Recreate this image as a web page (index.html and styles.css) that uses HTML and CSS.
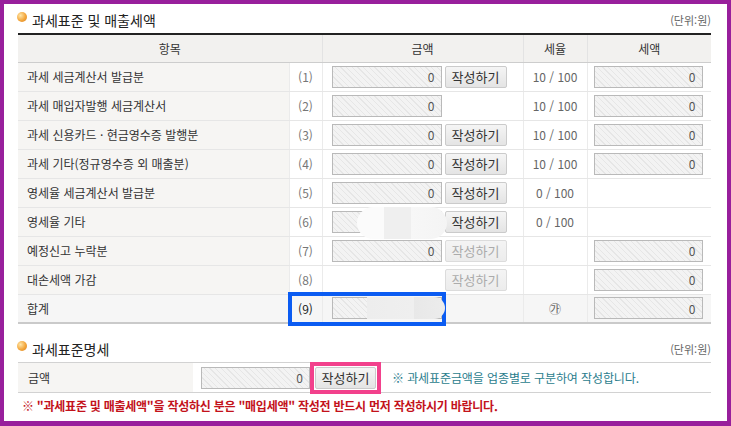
FILE: index.html
```html
<!DOCTYPE html>
<html lang="ko">
<head>
    <meta charset="UTF-8">
    <title>과세표준 및 매출세액</title>
    <link rel="stylesheet" href="styles.css">
</head>
<body>
<div class="frame">
    <div class="sec-head">
        <span class="bullet"></span>
        <h2>과세표준 및 매출세액</h2>
        <span class="unit">(단위:원)</span>
    </div>

    <table class="grid">
        <colgroup>
            <col class="c-label"><col class="c-no"><col class="c-amt"><col class="c-rate"><col class="c-tax">
        </colgroup>
        <thead>
            <tr><th colspan="2">항목</th><th>금액</th><th>세율</th><th>세액</th></tr>
        </thead>
        <tbody>
            <tr>
                <td class="label">과세 세금계산서 발급분</td>
                <td class="no">(1)</td>
                <td class="amt"><input class="field" value="0" readonly><button class="btn">작성하기</button></td>
                <td class="rate">10 / 100</td>
                <td class="tax"><input class="field" value="0" readonly></td>
            </tr>
            <tr>
                <td class="label">과세 매입자발행 세금계산서</td>
                <td class="no">(2)</td>
                <td class="amt"><input class="field" value="0" readonly></td>
                <td class="rate">10 / 100</td>
                <td class="tax"><input class="field" value="0" readonly></td>
            </tr>
            <tr>
                <td class="label">과세 신용카드 · 현금영수증 발행분</td>
                <td class="no">(3)</td>
                <td class="amt"><input class="field" value="0" readonly><button class="btn">작성하기</button></td>
                <td class="rate">10 / 100</td>
                <td class="tax"><input class="field" value="0" readonly></td>
            </tr>
            <tr>
                <td class="label">과세 기타(정규영수증 외 매출분)</td>
                <td class="no">(4)</td>
                <td class="amt"><input class="field" value="0" readonly><button class="btn">작성하기</button></td>
                <td class="rate">10 / 100</td>
                <td class="tax"><input class="field" value="0" readonly></td>
            </tr>
            <tr>
                <td class="label">영세율 세금계산서 발급분</td>
                <td class="no">(5)</td>
                <td class="amt"><input class="field" value="0" readonly><button class="btn">작성하기</button></td>
                <td class="rate">0 / 100</td>
                <td class="tax"></td>
            </tr>
            <tr>
                <td class="label">영세율 기타</td>
                <td class="no">(6)</td>
                <td class="amt"><span class="masked"><input class="field" value="" readonly><span class="blot"></span></span><button class="btn">작성하기</button></td>
                <td class="rate">0 / 100</td>
                <td class="tax"></td>
            </tr>
            <tr>
                <td class="label">예정신고 누락분</td>
                <td class="no">(7)</td>
                <td class="amt"><input class="field" value="0" readonly><button class="btn" disabled>작성하기</button></td>
                <td class="rate"></td>
                <td class="tax"><input class="field" value="0" readonly></td>
            </tr>
            <tr>
                <td class="label">대손세액 가감</td>
                <td class="no">(8)</td>
                <td class="amt"><span class="spacer"></span><button class="btn" disabled>작성하기</button></td>
                <td class="rate"></td>
                <td class="tax"><input class="field" value="0" readonly></td>
            </tr>
            <tr class="total">
                <td class="label">합계</td>
                <td class="no mark">(9)<span class="focus-box"></span></td>
                <td class="amt"><span class="masked"><input class="field" value="" readonly><span class="blot flat"></span></span></td>
                <td class="rate">㉮</td>
                <td class="tax"><input class="field" value="0" readonly></td>
            </tr>
        </tbody>
    </table>

    <div class="sec-head second">
        <span class="bullet"></span>
        <h2>과세표준명세</h2>
        <span class="unit">(단위:원)</span>
    </div>

    <div class="spec-row">
        <div class="spec-label">금액</div>
        <input class="field" value="0" readonly>
        <span class="pink-ring"><button class="btn">작성하기</button></span>
        <span class="note">※ 과세표준금액을 업종별로 구분하여 작성합니다.</span>
    </div>

    <p class="warn">※ "과세표준 및 매출세액"을 작성하신 분은 "매입세액" 작성전 반드시 먼저 작성하시기 바랍니다.</p>
</div>
</body>
</html>
```

FILE: styles.css
```css
* {
    box-sizing: border-box;
}
body {
    margin: 0;
    background: #fff;
    font-family: "Noto Sans CJK KR", "Noto Sans", sans-serif;
    font-size: 12px;
    color: #333;
}
.frame {
    width: 731px;
    height: 426px;
    border: solid #981f9c;
    border-width: 4px 4px 5px 4px;
    padding: 0 16px 0 14px;
    background: #fff;
}
.sec-head {
    display: flex;
    align-items: center;
    height: 29px;
    padding-top: 3px;
}
.sec-head.second {
    margin-top: 9px;
}
.bullet {
    width: 10px;
    height: 10px;
    border-radius: 50%;
    background: radial-gradient(circle at 35% 35%, #ffe6a8 0, #f3a63c 55%, #d7801e 100%);
    margin: -6px 5px 0 -1px;
}
h2 {
    flex: 1;
    margin: 0;
    font-size: 14px;
    font-weight: normal;
    color: #222;
}
.unit {
    font-size: 11px;
    color: #666;
}

/* main grid */
.grid {
    width: 693px;
    border-collapse: collapse;
    table-layout: fixed;
    border-top: 2px solid #222;
    border-bottom: 2px solid #cacaca;
}
.c-label { width: 271px; }
.c-no { width: 33px; }
.c-amt { width: 201px; }
.c-rate { width: 64px; }
.c-tax { width: 124px; }
.grid th {
    height: 28px;
    padding: 0;
    background: #f2f1ef;
    font-weight: normal;
    color: #333;
    border-bottom: 1px solid #cdcdcd;
    border-left: 1px solid #e3e3e3;
}
.grid th:first-child {
    border-left: none;
}
.grid td {
    height: 29px;
    padding: 0;
    border-bottom: 1px solid #e6e6e6;
    border-left: 1px solid #ebebeb;
    white-space: nowrap;
}
.grid td.label {
    border-left: none;
    padding-left: 9px;
    background: #f6f5f3;
}
.grid td.no {
    text-align: center;
    color: #777;
}
.grid td.amt {
    padding-left: 9px;
}
.grid td.amt > *,
.grid td.tax > * {
    vertical-align: middle;
}
.grid td.rate {
    text-align: center;
    color: #666;
}
.grid td.tax {
    padding-left: 6px;
}
.grid tr.total td {
    background: #f6f6f6;
}
.grid td.mark {
    position: relative;
    color: #222;
}

.field {
    width: 110px;
    height: 22px;
    padding: 0 6px 0 0;
    border: 1px solid #b9b9b9;
    background: repeating-linear-gradient(45deg, #f3f3f3 0, #f3f3f3 3px, #e6e6e6 3px, #e6e6e6 4px);
    font-family: "Noto Sans CJK KR", sans-serif;
    font-size: 12px;
    color: #555;
    text-align: right;
    outline: none;
}
.tax .field {
    width: 109px;
}
.btn {
    width: 62px;
    height: 22px;
    margin-left: 3px;
    padding: 0;
    border: 1px solid #cbcbcb;
    border-radius: 2px;
    background: linear-gradient(#f5f5f5, #e4e4e4);
    font-family: "Noto Sans CJK KR", sans-serif;
    font-size: 13px;
    color: #333;
}
.btn:disabled {
    color: #ababab;
    border-color: #dcdcdc;
    background: linear-gradient(#f4f4f4, #ececec);
}
.spacer {
    display: inline-block;
    width: 110px;
}

/* redacted spots */
.masked {
    position: relative;
    display: inline-block;
    vertical-align: middle;
}
.masked .field {
    display: block;
}
.blot {
    position: absolute;
    left: 25px;
    top: -4px;
    width: 90px;
    height: 32px;
    border-radius: 16px;
    background: linear-gradient(90deg, #fbfbfb 0, #fbfbfb 30%, #efefef 30%, #efefef 60%, #f7f7f7 60%, #f4f4f4 100%);
}
.blot.flat {
    left: 35px;
    top: 0;
    width: 78px;
    height: 22px;
    border-radius: 0 11px 11px 0;
    background: linear-gradient(90deg, #ededed 0, #efefef 60%, #e8e8e8 60%, #ececec 100%);
}
.focus-box {
    position: absolute;
    left: -2px;
    top: -3px;
    width: 158px;
    height: 34px;
    border: 4px solid #0b5cf2;
}

/* spec row */
.spec-row {
    display: flex;
    align-items: center;
    height: 31px;
    border-top: 1px solid #d2d2d2;
    border-bottom: 1px solid #d2d2d2;
}
.spec-label {
    align-self: stretch;
    display: flex;
    align-items: center;
    width: 175px;
    padding-left: 10px;
    background: #f6f5f3;
}
.spec-row .field {
    width: 109px;
    margin-left: 8px;
}
.pink-ring {
    display: inline-flex;
    padding: 1px;
    border: 4px solid #f2418c;
}
.pink-ring .btn {
    width: 61px;
    margin: 0;
}
.note {
    margin-left: 11px;
    color: #2b7d8d;
    letter-spacing: -0.1px;
}
.warn {
    margin: 0;
    padding: 4px 0 0 4px;
    color: #c3121b;
    font-weight: bold;
    letter-spacing: -0.25px;
}
```
